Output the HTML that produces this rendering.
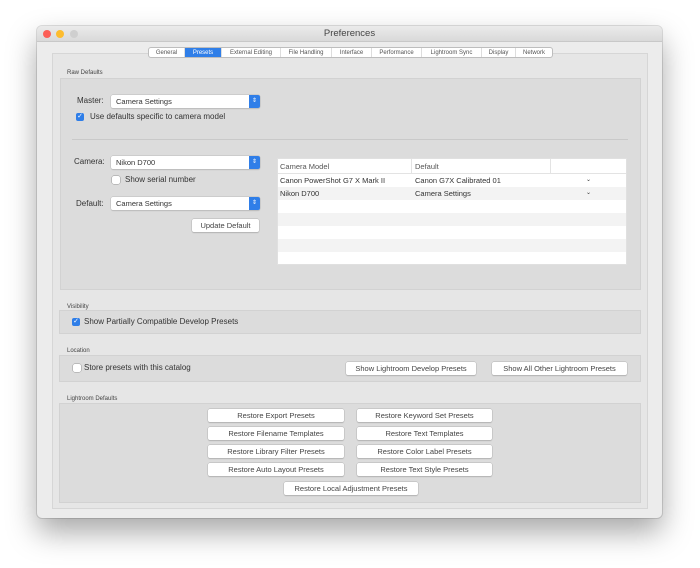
<!DOCTYPE html>
<html><head><style>
*{box-sizing:border-box;margin:0;padding:0}
body{width:700px;height:568px;background:#fff;font-family:"Liberation Sans",sans-serif;position:relative;overflow:hidden;color:#333}
.a{position:absolute}
.win{left:37px;top:26px;width:625px;height:492px;background:#ececec;border-radius:5px;box-shadow:0 14px 30px rgba(0,0,0,.35),0 0 0 1px rgba(0,0,0,.12)}
.tb{left:37px;top:26px;width:625px;height:16px;background:linear-gradient(#ebebeb,#d9d9d9);border-radius:5px 5px 0 0;border-bottom:1px solid #c8c8c8;text-align:center;font-size:9.5px;line-height:16px;color:#444}
.dot{width:8px;height:8px;border-radius:50%;top:30px}
.panel{left:52px;top:53px;width:596px;height:456px;border:1px solid #d6d6d6;background:#e6e6e6}
.grp{background:#dcdcdc;border:1px solid #d2d2d2}
.lbl{font-size:6px;color:#444}
.tabs{left:148px;top:47px;height:11px;display:flex;border:1px solid #bdbdbd;border-radius:3px;background:#fff;font-size:6px;overflow:hidden}
.tabs div{height:10px;line-height:10px;text-align:center;border-right:1px solid #ddd;color:#555}
.t{font-size:8px;color:#333}
.pop{background:#fff;border-radius:2px;box-shadow:0 0 0 .5px #bbb,0 1px 1px rgba(0,0,0,.15);font-size:7.5px;line-height:13px;padding-left:5px;height:13px}
.pop i{position:absolute;right:0;top:0;width:11px;height:13px;background:#2f7ee8;border-radius:0 2px 2px 0;color:#fff;font-style:normal;font-size:6px;line-height:13px;text-align:center}
.cb{width:8px;height:8px;border-radius:2px;background:#fff;box-shadow:0 0 0 .5px #999}
.cb.on{background:#2f7ee8;box-shadow:none;color:#fff;font-size:7px;line-height:8px;text-align:center}
.btn{background:#fff;border-radius:2px;box-shadow:0 0 0 .5px #b5b5b5,0 1px 1px rgba(0,0,0,.2);font-size:7.5px;line-height:13px;height:13px;text-align:center;color:#444}
.row{position:absolute;left:0;width:348px;height:13px;font-size:7.5px;line-height:13px}
</style></head><body>
<div class="a win"></div>
<div class="a tb">Preferences</div>
<div class="a dot" style="left:43px;background:#fc5f57"></div>
<div class="a dot" style="left:56px;background:#fdbc2e"></div>
<div class="a dot" style="left:70px;background:#cfcfcf"></div>
<div class="a panel"></div>
<div class="a tabs">
<div style="width:36px">General</div><div style="width:37px;background:#2f7ee8;color:#fff">Presets</div><div style="width:59px">External Editing</div><div style="width:51px">File Handling</div><div style="width:40px">Interface</div><div style="width:50px">Performance</div><div style="width:60px">Lightroom Sync</div><div style="width:34px">Display</div><div style="width:36px;border:0">Network</div></div>

<div class="a lbl" style="left:67px;top:70px">Raw Defaults</div>
<div class="a grp" style="left:60px;top:78px;width:581px;height:212px"></div>
<div class="a t" style="left:77px;top:96px">Master:</div>
<div class="a pop" style="left:111px;top:95px;width:149px">Camera Settings<i>⇕</i></div>
<div class="a cb on" style="left:76px;top:113px">✓</div>
<div class="a t" style="left:90px;top:112px">Use defaults specific to camera model</div>
<div class="a" style="left:72px;top:139px;width:556px;height:1px;background:#c9c9c9"></div>
<div class="a t" style="left:74px;top:157px">Camera:</div>
<div class="a pop" style="left:111px;top:156px;width:149px">Nikon D700<i>⇕</i></div>
<div class="a cb" style="left:112px;top:176px"></div>
<div class="a t" style="left:125px;top:175px">Show serial number</div>
<div class="a t" style="left:76px;top:199px">Default:</div>
<div class="a pop" style="left:111px;top:197px;width:149px">Camera Settings<i>⇕</i></div>
<div class="a btn" style="left:192px;top:219px;width:67px">Update Default</div>
<div class="a" style="left:277px;top:158px;width:350px;height:107px;background:#fff;border:1px solid #e0e0e0">
<div class="row" style="top:0;height:15px;line-height:15px;border-bottom:1px solid #e3e3e3;color:#555"><span class="a" style="left:2px">Camera Model</span><span class="a" style="left:137px">Default</span><span class="a" style="left:133px;top:0;width:1px;height:14px;background:#e3e3e3"></span><span class="a" style="left:272px;top:0;width:1px;height:14px;background:#e3e3e3"></span></div>
<div class="row" style="top:15px"><span class="a" style="left:2px">Canon PowerShot G7 X Mark II</span><span class="a" style="left:137px">Canon G7X Calibrated 01</span><span class="a" style="left:308px;font-size:6px">⌄</span></div>
<div class="row" style="top:28px;background:#f3f3f3"><span class="a" style="left:2px">Nikon D700</span><span class="a" style="left:137px">Camera Settings</span><span class="a" style="left:308px;font-size:6px">⌄</span></div>
<div class="row" style="top:54px;background:#f3f3f3"></div>
<div class="row" style="top:80px;background:#f3f3f3"></div>
</div>

<div class="a lbl" style="left:67px;top:304px">Visibility</div>
<div class="a grp" style="left:59px;top:310px;width:582px;height:24px"></div>
<div class="a cb on" style="left:72px;top:318px">✓</div>
<div class="a t" style="left:84px;top:317px">Show Partially Compatible Develop Presets</div>

<div class="a lbl" style="left:67px;top:348px">Location</div>
<div class="a grp" style="left:59px;top:355px;width:582px;height:27px"></div>
<div class="a cb" style="left:73px;top:364px"></div>
<div class="a t" style="left:84px;top:363px">Store presets with this catalog</div>
<div class="a btn" style="left:346px;top:362px;width:130px">Show Lightroom Develop Presets</div>
<div class="a btn" style="left:492px;top:362px;width:135px">Show All Other Lightroom Presets</div>

<div class="a lbl" style="left:67px;top:396px">Lightroom Defaults</div>
<div class="a grp" style="left:59px;top:403px;width:582px;height:100px"></div>
<div class="a btn" style="left:208px;top:409px;width:136px">Restore Export Presets</div>
<div class="a btn" style="left:357px;top:409px;width:135px">Restore Keyword Set Presets</div>
<div class="a btn" style="left:208px;top:427px;width:136px">Restore Filename Templates</div>
<div class="a btn" style="left:357px;top:427px;width:135px">Restore Text Templates</div>
<div class="a btn" style="left:208px;top:445px;width:136px">Restore Library Filter Presets</div>
<div class="a btn" style="left:357px;top:445px;width:135px">Restore Color Label Presets</div>
<div class="a btn" style="left:208px;top:463px;width:136px">Restore Auto Layout Presets</div>
<div class="a btn" style="left:357px;top:463px;width:135px">Restore Text Style Presets</div>
<div class="a btn" style="left:284px;top:482px;width:134px">Restore Local Adjustment Presets</div>
</body></html>
